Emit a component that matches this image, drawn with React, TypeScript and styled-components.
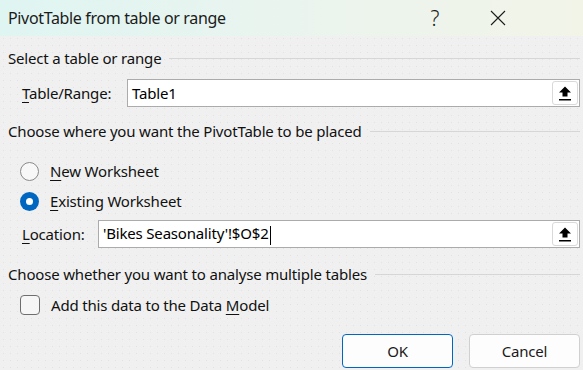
import React from "react";
import styled, { createGlobalStyle } from "styled-components";

const GlobalStyle = createGlobalStyle`
  html, body {
    margin: 0;
    padding: 0;
    background: #f0f0f0;
  }
  body {
    font-family: "Noto Sans", "Open Sans", sans-serif;
    color: #111;
  }
`;

const Dialog = styled.div`
  width: 583px;
  height: 370px;
  display: flex;
  flex-direction: column;
  background-color: #f0f0f0;
  background-image: radial-gradient(#e2e2e2 0.7px, transparent 0.8px);
  background-size: 7px 7px;
  overflow: hidden;
`;

const TitleBar = styled.div`
  height: 36px;
  flex: none;
  display: flex;
  align-items: center;
  padding-left: 8px;
  background: linear-gradient(90deg, #dff5f2 0%, #eaf4ee 50%, #f2f4e8 100%);
`;

const Title = styled.div`
  flex: 1;
  font-size: 16px;
  letter-spacing: -0.35px;
  color: #1b1b1b;
`;

const TitleButton = styled.div`
  width: 46px;
  height: 36px;
  display: flex;
  align-items: center;
  justify-content: center;
  font-size: 21px;
  font-weight: 300;
  color: #1b1b1b;
`;

const TitleButtons = styled.div`
  display: flex;
  gap: 17px;
  margin-right: 62px;
`;

const Body = styled.div`
  flex: 1;
  display: flex;
  flex-direction: column;
  padding: 0 3px 0 8px;
  font-size: 15px;
  letter-spacing: -0.18px;
`;

const SectionHead = styled.div<{ $top: number }>`
  display: flex;
  align-items: center;
  gap: 8px;
  height: 20px;
  margin-top: ${(p) => p.$top}px;
  white-space: nowrap;

  &::after {
    content: "";
    flex: 1;
    height: 1px;
    background: #d6d6d6;
  }
`;

const FieldRow = styled.div<{ $top: number }>`
  display: flex;
  align-items: center;
  margin-top: ${(p) => p.$top}px;
  padding-left: 14px;
`;

const FieldLabel = styled.label<{ $width: number }>`
  width: ${(p) => p.$width}px;
  flex: none;
`;

const Input = styled.div`
  flex: 1;
  height: 28px;
  box-sizing: border-box;
  display: flex;
  align-items: center;
  background: #fff;
  border: 1px solid #ababab;
  padding-left: 4px;
  padding-right: 1px;
  color: #000;
`;

const InputText = styled.span`
  flex: 1;
  white-space: nowrap;
`;

const Caret = styled.span`
  display: inline-block;
  width: 1px;
  height: 19px;
  background: #000;
  vertical-align: middle;
  margin-left: 1px;
`;

const CollapseButton = styled.div`
  width: 26px;
  height: 24px;
  box-sizing: border-box;
  border: 1px solid #d9d9d9;
  border-radius: 3px;
  background: #fff;
  display: flex;
  align-items: center;
  justify-content: center;
`;

const OptionRow = styled.div<{ $top: number }>`
  display: flex;
  align-items: center;
  gap: 11px;
  height: 30px;
  margin-top: ${(p) => p.$top}px;
  padding-left: 12px;
`;

const Radio = styled.span<{ $checked?: boolean }>`
  width: 19px;
  height: 19px;
  box-sizing: border-box;
  border-radius: 50%;
  flex: none;
  display: flex;
  align-items: center;
  justify-content: center;
  border: ${(p) => (p.$checked ? "none" : "1px solid #8a8a8a")};
  background: ${(p) => (p.$checked ? "#0067c0" : "#f8f8f8")};

  &::after {
    content: "";
    display: ${(p) => (p.$checked ? "block" : "none")};
    width: 7px;
    height: 7px;
    border-radius: 50%;
    background: #fff;
  }
`;

const Checkbox = styled.span`
  width: 20px;
  height: 20px;
  box-sizing: border-box;
  border: 1px solid #6e6e6e;
  border-radius: 4px;
  background: #f6f6f6;
  flex: none;
`;

const Key = styled.span`
  text-decoration: underline;
  text-underline-offset: 3px;
  text-decoration-thickness: 1px;
`;

const Footer = styled.div`
  display: flex;
  justify-content: flex-end;
  gap: 16px;
  margin-top: auto;
  padding-bottom: 2px;
`;

const Button = styled.div<{ $primary?: boolean }>`
  width: 111px;
  height: 34px;
  box-sizing: border-box;
  display: flex;
  align-items: center;
  justify-content: center;
  background: #fdfdfd;
  border-radius: 4px;
  border: 1px solid ${(p) => (p.$primary ? "#0067c0" : "#d0d0d0")};
  color: #1a1a1a;
`;

const UploadIcon = () => (
  <svg width="14" height="16" viewBox="0 0 14 16">
    <path d="M7 1.5 L13 7.5 H9.5 V11.5 H4.5 V7.5 H1 Z" fill="#000" />
    <rect x="1" y="14" width="12" height="1.5" fill="#000" />
  </svg>
);

const CloseIcon = () => (
  <svg width="16" height="16" viewBox="0 0 16 16">
    <path d="M1 1 L15 15 M15 1 L1 15" stroke="#1b1b1b" strokeWidth="1.1" />
  </svg>
);

export default function App() {
  return (
    <>
      <GlobalStyle />
      <Dialog>
        <TitleBar>
          <Title>PivotTable from table or range</Title>
          <TitleButtons>
            <TitleButton>?</TitleButton>
            <TitleButton>
              <CloseIcon />
            </TitleButton>
          </TitleButtons>
        </TitleBar>
        <Body>
          <SectionHead $top={12}>Select a table or range</SectionHead>
          <FieldRow $top={11}>
            <FieldLabel $width={105}>
              <Key>T</Key>able/Range:
            </FieldLabel>
            <Input>
              <InputText>Table1</InputText>
              <CollapseButton>
                <UploadIcon />
              </CollapseButton>
            </Input>
          </FieldRow>
          <SectionHead $top={14}>
            Choose where you want the PivotTable to be placed
          </SectionHead>
          <OptionRow $top={15}>
            <Radio />
            <span>
              <Key>N</Key>ew Worksheet
            </span>
          </OptionRow>
          <OptionRow $top={0}>
            <Radio $checked />
            <span>
              <Key>E</Key>xisting Worksheet
            </span>
          </OptionRow>
          <FieldRow $top={4}>
            <FieldLabel $width={76}>
              <Key>L</Key>ocation:
            </FieldLabel>
            <Input>
              <InputText>
                'Bikes Seasonality'!$O$2
                <Caret />
              </InputText>
              <CollapseButton>
                <UploadIcon />
              </CollapseButton>
            </Input>
          </FieldRow>
          <SectionHead $top={16}>
            Choose whether you want to analyse multiple tables
          </SectionHead>
          <OptionRow $top={6}>
            <Checkbox />
            <span>
              Add this data to the Data <Key>M</Key>odel
            </span>
          </OptionRow>
          <Footer>
            <Button $primary>OK</Button>
            <Button>Cancel</Button>
          </Footer>
        </Body>
      </Dialog>
    </>
  );
}
